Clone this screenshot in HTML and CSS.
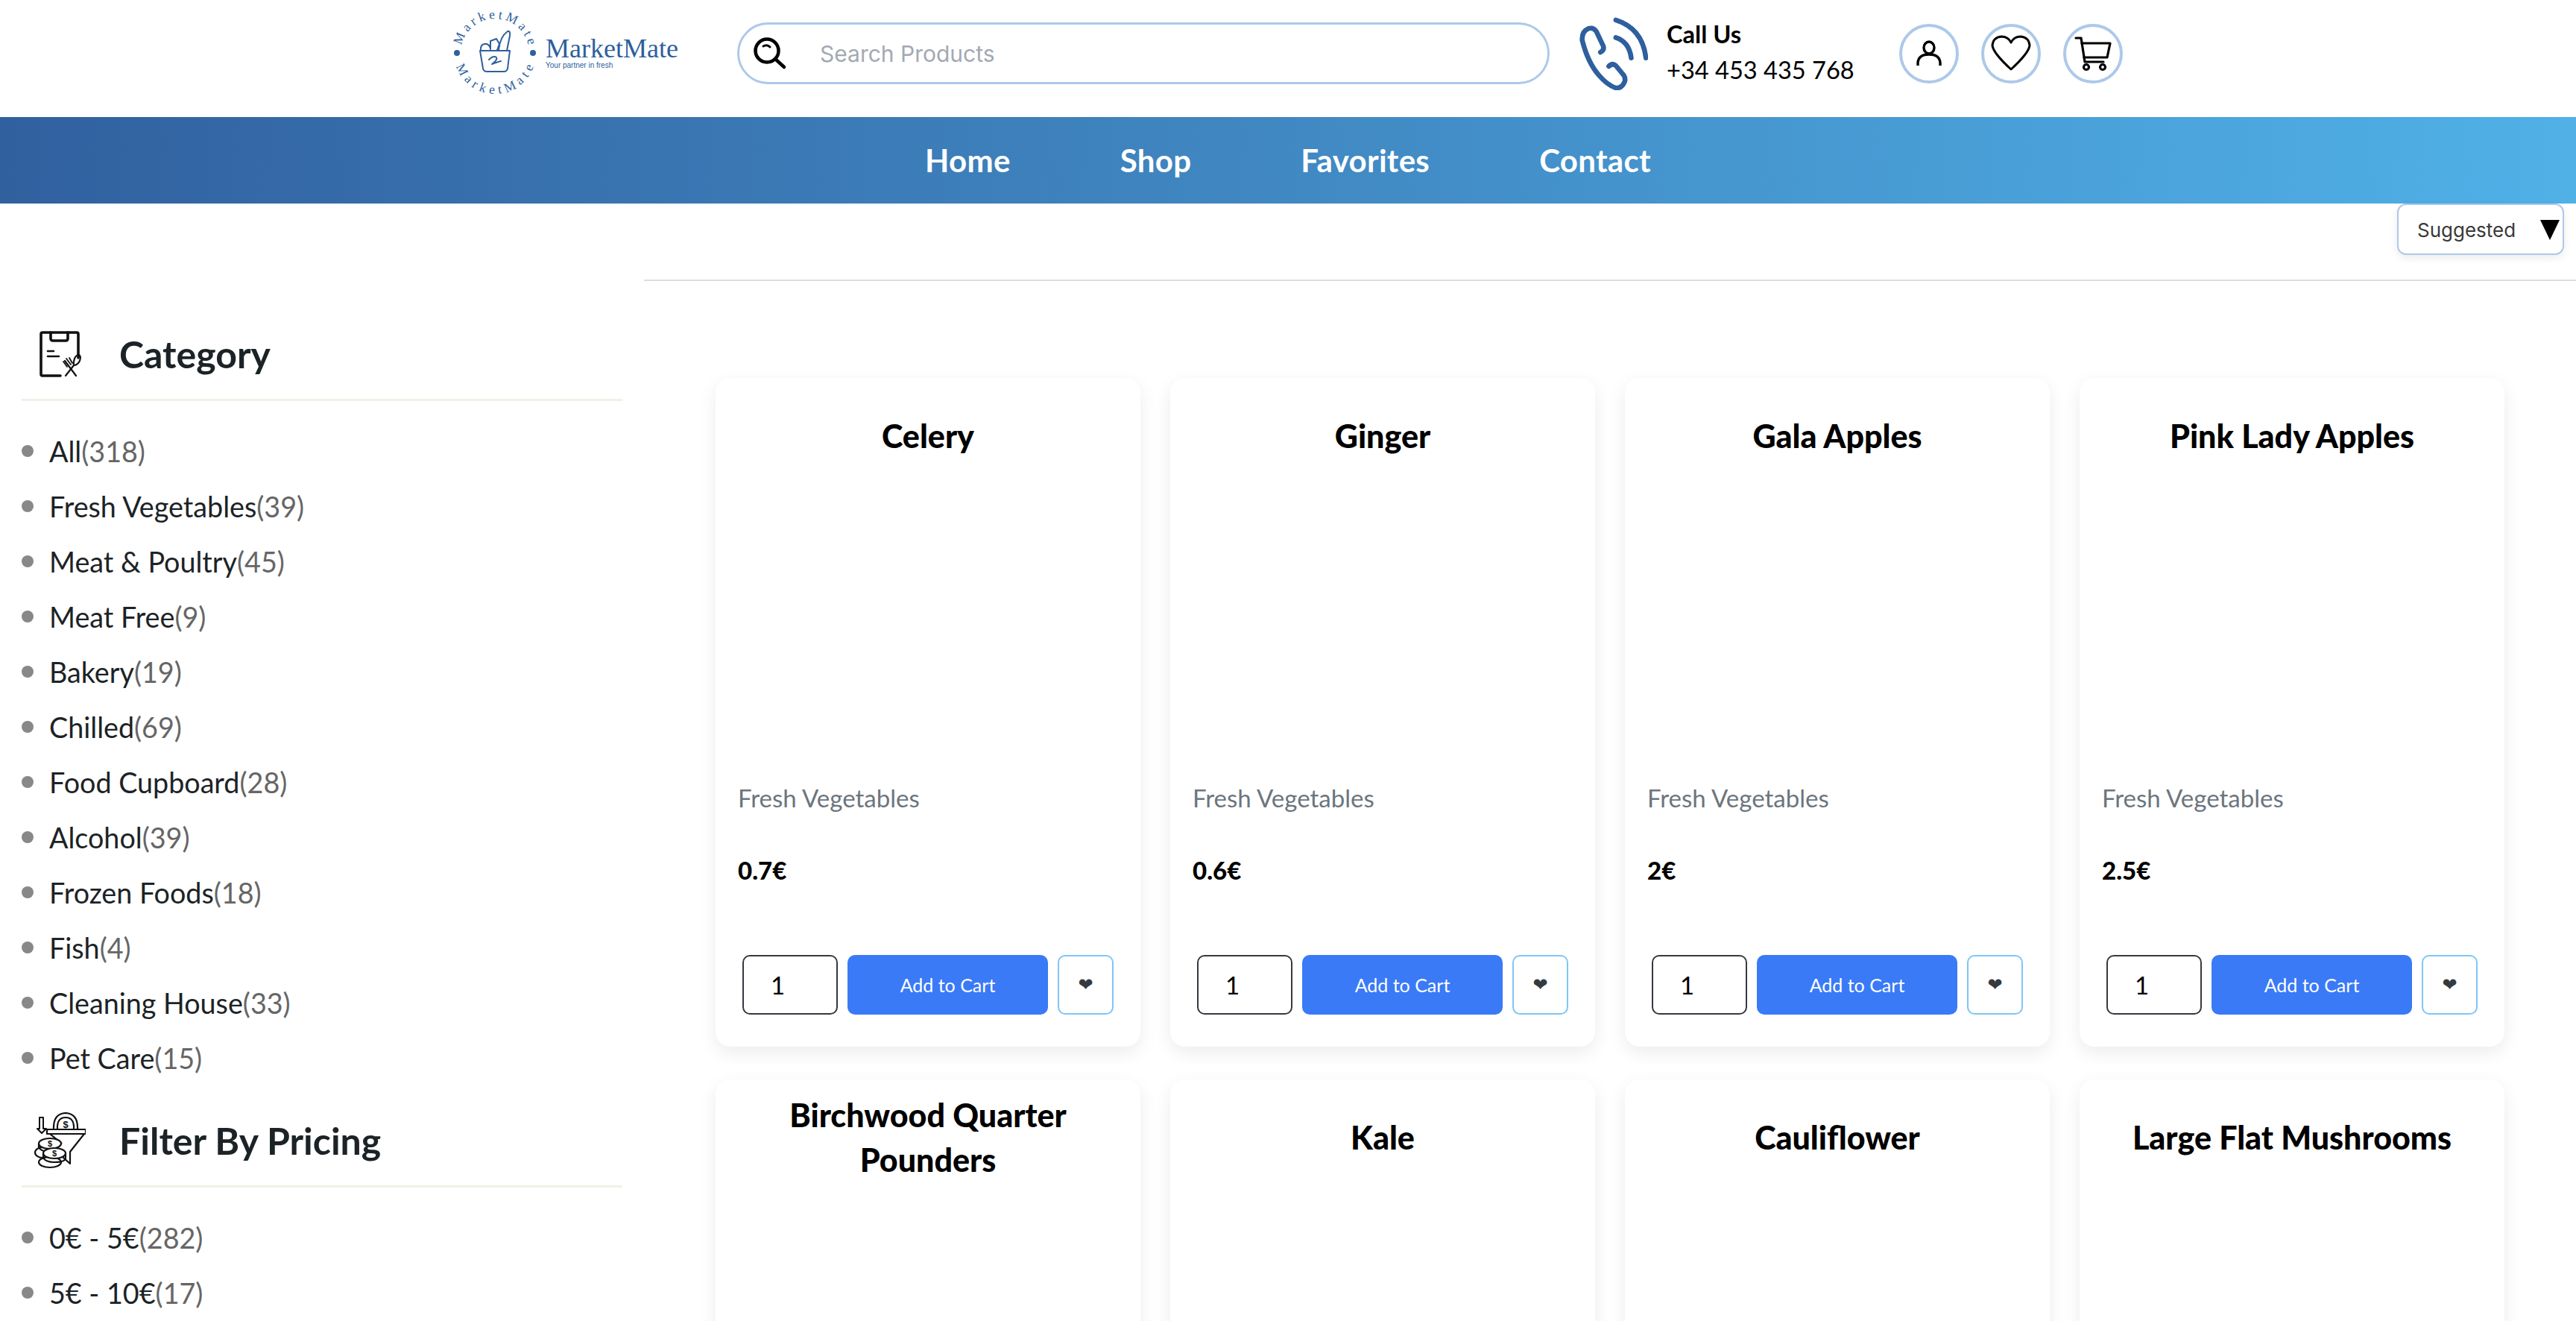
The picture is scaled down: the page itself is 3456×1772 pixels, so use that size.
FILE: index.html
```html
<!DOCTYPE html>
<html lang="en">
<head>
  <meta charset="UTF-8">
  <title>MarketMate</title>
  <link rel="stylesheet" href="styles.css">
</head>
<body>

  <header class="top-bar">
    <a class="logo" href="#">
      <svg class="logo-mark" viewBox="0 0 112 118">
        <defs>
          <path id="arcTop" d="M10 58 A46 46 0 0 1 102 58"/>
          <path id="arcBottom" d="M1 58 A55 55 0 0 0 111 58"/>
        </defs>
        <text class="logo-ring"><textPath href="#arcTop" startOffset="10" textLength="124">MarketMate</textPath></text>
        <text class="logo-ring"><textPath href="#arcBottom" startOffset="18" textLength="136">MarketMate</textPath></text>
        <circle cx="5" cy="58" r="4" fill="#2e5f9e"/>
        <circle cx="107" cy="58" r="4" fill="#2e5f9e"/>
        <g fill="none" stroke="#2e5f9e" stroke-width="2" stroke-linejoin="round" stroke-linecap="round">
          <path d="M36 55h40l-3 24q-1 4-5 4H45q-4 0-5-4z"/>
          <path d="M48 67q6-6 10-3q2 3-6 9q8-3 12-4"/>
          <path d="M37 55q-1-8 5-9q6-1 8 6"/>
          <path d="M50 53V42l8-3 4 7-3 8"/>
          <path d="M61 54q2-18 12-25q4-1 3 6l-4 20"/>
        </g>
      </svg>
      <div class="logo-text">
        <span class="logo-name">MarketMate</span>
        <span class="logo-tag">Your partner in fresh</span>
      </div>
    </a>

    <form class="search-box">
      <svg class="search-icon" viewBox="0 0 48 48" fill="none" stroke="#000" stroke-width="4.5" stroke-linecap="round">
        <circle cx="21" cy="20" r="15.5"/>
        <path d="M32 31l12 11"/>
        <path d="M16 14q5-3 9 1" stroke-width="3"/>
      </svg>
      <input type="text" placeholder="Search Products">
    </form>

    <div class="call">
      <svg class="call-icon" viewBox="0 0 98 104" fill="none" stroke="#2e5f9e" stroke-width="7" stroke-linecap="round" stroke-linejoin="round">
        <path d="M30 50q6-3 4-9L24 20q-4-6-11-4Q3 20 4 33q8 32 24 50q12 14 24 18q9 1 13-10q1-6-4-11l-9-11q-5-4-10 1"/>
        <path d="M52 4q38 12 43 54"/>
        <path d="M52 29q19 6 22 29"/>
      </svg>
      <div class="call-text">
        <span class="call-label">Call Us</span>
        <span class="call-number">+34 453 435 768</span>
      </div>
    </div>

    <div class="header-icons">
      <a class="round-icon" href="#">
        <svg viewBox="0 0 44 44" fill="none" stroke="#000" stroke-width="3.4">
          <ellipse cx="22" cy="14" rx="7" ry="8"/>
          <path d="M7 38v-4q1-11 15-11t15 11v4"/>
        </svg>
      </a>
      <a class="round-icon" href="#">
        <svg viewBox="0 0 56 50" class="icon-heart" fill="none" stroke="#000" stroke-width="3" stroke-linejoin="round">
          <path d="M28 46Q4 24 3 14Q4 3 15 2q9 0 13 8q4-8 13-8q11 1 12 12q-1 10-25 32z"/>
        </svg>
      </a>
      <a class="round-icon" href="#">
        <svg viewBox="0 0 50 50" class="icon-cart" fill="none" stroke="#000" stroke-width="3.2" stroke-linecap="round" stroke-linejoin="round">
          <path d="M2 4h7l5 32h25"/>
          <path d="M10 11h38l-4 19H13"/>
          <circle cx="16" cy="43" r="3.5"/>
          <circle cx="38" cy="43" r="3.5"/>
        </svg>
      </a>
    </div>
  </header>

  <nav class="main-nav">
    <a href="#">Home</a>
    <a href="#">Shop</a>
    <a href="#">Favorites</a>
    <a href="#">Contact</a>
  </nav>

  <div class="page">
    <aside class="sidebar">
      <div class="side-head">
        <svg class="side-icon" viewBox="0 0 60 64" fill="none" stroke="#111" stroke-width="3.6" stroke-linecap="round" stroke-linejoin="round">
          <path d="M30 61H6q-2 0-2-2V5q0-2 2-2h46q2 0 2 2v32"/>
          <path d="M17 3v8q0 3 3 3h17q3 0 3-3V3"/>
          <path d="M13 28h8M13 35h15" stroke-width="2.6"/>
          <path d="M37 61l11-14M48 47q5 0 8-6q2-6-1-8q-4 0-6 5q-2 5-1 9M36 41l15 20" stroke-width="2.2"/>
          <path d="M34 42l5 7M38 38l6 8M42 37l4 7" stroke-width="1.8"/>
        </svg>
        <h2>Category</h2>
      </div>
      <ul class="side-list">
        <li>All<span>(318)</span></li>
        <li>Fresh Vegetables<span>(39)</span></li>
        <li>Meat &amp; Poultry<span>(45)</span></li>
        <li>Meat Free<span>(9)</span></li>
        <li>Bakery<span>(19)</span></li>
        <li>Chilled<span>(69)</span></li>
        <li>Food Cupboard<span>(28)</span></li>
        <li>Alcohol<span>(39)</span></li>
        <li>Frozen Foods<span>(18)</span></li>
        <li>Fish<span>(4)</span></li>
        <li>Cleaning House<span>(33)</span></li>
        <li>Pet Care<span>(15)</span></li>
      </ul>

      <div class="side-head">
        <svg class="side-icon side-icon-wide" viewBox="0 0 70 76" fill="none" stroke="#111" stroke-width="2.2" stroke-linejoin="round">
          <path d="M27 23q-1-21 16-22q17 1 16 22"/>
          <path d="M32 23q-1-16 11-16q12 0 11 16"/>
          <text class="price-sign" x="43" y="21" font-size="13">$</text>
          <path d="M18 23h52v6H18z"/>
          <path d="M22 29l16 13M68 29L49 53v16l-10-9"/>
          <path d="M5 22h3V7h5v15h4l-6 6z" stroke-width="2"/>
          <ellipse cx="12" cy="54" rx="10" ry="7" fill="#fff"/>
          <ellipse cx="22" cy="42" rx="15" ry="7" fill="#fff"/>
          <path d="M7 42v5q3 6 15 6"/>
          <ellipse cx="22" cy="67" rx="15" ry="7" fill="#fff"/>
          <ellipse cx="28" cy="55" rx="15" ry="7" fill="#fff"/>
          <path d="M13 55v6q3 6 15 6q15 0 15-6v-6"/>
          <text class="price-sign" x="22" y="46" font-size="11">$</text>
          <text class="price-sign" x="28" y="59" font-size="11">$</text>
        </svg>
        <h2>Filter By Pricing</h2>
      </div>
      <ul class="side-list">
        <li>0€ - 5€<span>(282)</span></li>
        <li>5€ - 10€<span>(17)</span></li>
      </ul>
    </aside>

    <main class="content">
      <div class="sort-bar">
        <div class="sort-select">
          <span>Suggested</span>
          <i class="sort-arrow"></i>
        </div>
      </div>

      <div class="product-grid">
        <article class="card">
          <h3>Celery</h3>
          <div class="card-image"></div>
          <p class="card-cat">Fresh Vegetables</p>
          <p class="card-price">0.7€</p>
          <div class="card-actions">
            <input type="number" value="1">
            <button class="btn-add">Add to Cart</button>
            <button class="btn-fav">❤</button>
          </div>
        </article>
        <article class="card">
          <h3>Ginger</h3>
          <div class="card-image"></div>
          <p class="card-cat">Fresh Vegetables</p>
          <p class="card-price">0.6€</p>
          <div class="card-actions">
            <input type="number" value="1">
            <button class="btn-add">Add to Cart</button>
            <button class="btn-fav">❤</button>
          </div>
        </article>
        <article class="card">
          <h3>Gala Apples</h3>
          <div class="card-image"></div>
          <p class="card-cat">Fresh Vegetables</p>
          <p class="card-price">2€</p>
          <div class="card-actions">
            <input type="number" value="1">
            <button class="btn-add">Add to Cart</button>
            <button class="btn-fav">❤</button>
          </div>
        </article>
        <article class="card">
          <h3>Pink Lady Apples</h3>
          <div class="card-image"></div>
          <p class="card-cat">Fresh Vegetables</p>
          <p class="card-price">2.5€</p>
          <div class="card-actions">
            <input type="number" value="1">
            <button class="btn-add">Add to Cart</button>
            <button class="btn-fav">❤</button>
          </div>
        </article>
        <article class="card">
          <h3>Birchwood Quarter Pounders</h3>
          <div class="card-image"></div>
        </article>
        <article class="card">
          <h3>Kale</h3>
          <div class="card-image"></div>
        </article>
        <article class="card">
          <h3>Cauliflower</h3>
          <div class="card-image"></div>
        </article>
        <article class="card">
          <h3>Large Flat Mushrooms</h3>
          <div class="card-image"></div>
        </article>
      </div>
    </main>
  </div>

</body>
</html>
```

FILE: styles.css
```css
* {
  box-sizing: border-box;
}

html, body {
  height: 100%;
  overflow: hidden;
}

body {
  margin: 0;
  background: #fff;
  color: #000;
  font-family: 'Lato', 'Noto Sans', sans-serif;
}

a {
  color: inherit;
  text-decoration: none;
}

/* Header */
.top-bar {
  height: 157px;
  padding-bottom: 14px;
  display: flex;
  align-items: center;
  justify-content: center;
}

.logo {
  width: 300px;
  margin-right: 81px;
  display: flex;
  align-items: center;
  gap: 12px;
}

.logo-mark {
  width: 112px;
  height: 118px;
  flex: none;
  overflow: visible;
}

.logo-ring {
  font-family: 'Liberation Serif', serif;
  font-size: 17.5px;
  fill: #2e5f9e;
}

.logo-text {
  padding-bottom: 4px;
  display: flex;
  flex-direction: column;
  color: #2e5f9e;
}

.logo-name {
  font-family: 'Liberation Serif', serif;
  font-size: 36px;
  line-height: 36px;
  white-space: nowrap;
}

.logo-tag {
  font-family: 'Liberation Sans', sans-serif;
  font-size: 10px;
  line-height: 10px;
  white-space: nowrap;
}

.search-box {
  width: 1090px;
  height: 83px;
  margin: 0 40px 0 0;
  padding: 0 24px 0 16px;
  display: flex;
  align-items: center;
  gap: 42px;
  border: 3px solid #adc9e9;
  border-radius: 42px;
}

.search-icon {
  width: 48px;
  height: 48px;
  flex: none;
}

.search-box input {
  flex: 1;
  border: none;
  outline: none;
  font-family: 'Inter', sans-serif;
  font-size: 30px;
  color: #333;
}

.search-box input::placeholder {
  color: #a3a9b3;
}

.call {
  width: 369px;
  margin-right: 60px;
  display: flex;
  align-items: center;
  gap: 25px;
}

.call-icon {
  width: 92px;
  height: 98px;
  flex: none;
}

.call-text {
  padding-bottom: 4px;
  display: flex;
  flex-direction: column;
  gap: 12px;
  font-size: 32.6px;
  line-height: 36px;
  white-space: nowrap;
}

.call-label {
  font-weight: 700;
}

.header-icons {
  display: flex;
  gap: 30px;
}

.round-icon {
  width: 80px;
  height: 80px;
  display: flex;
  align-items: center;
  justify-content: center;
  border: 4px solid #adc9e9;
  border-radius: 50%;
}

.round-icon svg {
  width: 44px;
  height: 44px;
}

.round-icon .icon-heart {
  width: 56px;
  height: 50px;
}

.round-icon .icon-cart {
  width: 50px;
  height: 50px;
}

/* Nav */
.main-nav {
  height: 116px;
  display: flex;
  align-items: center;
  justify-content: center;
  gap: 147px;
  background: linear-gradient(90deg, #31609f 0%, #50b1e7 100%);
  color: #fff;
  font-size: 42px;
  font-weight: 700;
  letter-spacing: 0.3px;
}

/* Page */
.page {
  display: flex;
}

.sidebar {
  width: 864px;
  flex: none;
  padding: 165px 29px 0;
}

.side-head {
  height: 100px;
  width: 806px;
  padding-bottom: 24px;
  display: flex;
  align-items: center;
  border-bottom: 3px solid #eff2e6;
}

.side-icon {
  width: 60px;
  height: 64px;
  margin-left: 22px;
  margin-right: 49px;
  flex: none;
}

.side-icon-wide {
  width: 70px;
  height: 76px;
  margin-left: 16px;
  margin-right: 45px;
}

.price-sign {
  font-family: 'Liberation Sans', sans-serif;
  font-weight: 700;
  text-anchor: middle;
  fill: #111;
  stroke: none;
}

.side-head h2 {
  margin: 0;
  font-size: 50px;
  font-weight: 700;
  color: #1c2326;
}

.side-list {
  list-style: none;
  margin: 0 0 37px;
  padding: 30px 0 0;
}

.side-list li {
  height: 74px;
  display: flex;
  align-items: center;
  font-size: 37.7px;
  color: #1c2326;
}

.side-list li::before {
  content: "";
  width: 16px;
  height: 16px;
  margin-right: 21px;
  background: #888;
  border-radius: 50%;
}

.side-list span {
  color: #666;
}

.content {
  flex: 1;
}

.sort-bar {
  height: 104px;
  padding-right: 16px;
  display: flex;
  justify-content: flex-end;
  border-bottom: 2px solid #ddd;
}

.sort-select {
  width: 224px;
  height: 69px;
  padding: 2px 4px 0 25px;
  display: flex;
  align-items: center;
  justify-content: space-between;
  background: #fff;
  border: 2px solid #adc9e9;
  border-radius: 12px;
  box-shadow: 0 4px 12px rgba(0, 0, 0, 0.08);
  font-family: 'Inter', sans-serif;
  font-size: 26px;
  color: #3a3a3a;
}

.sort-arrow {
  width: 0;
  height: 0;
  border-left: 13px solid transparent;
  border-right: 13px solid transparent;
  border-top: 27px solid #000;
}

.product-grid {
  padding: 130px 0 0 96px;
  display: grid;
  grid-template-columns: repeat(4, 570px);
  gap: 44px 40px;
}

.card {
  height: 897px;
  padding: 18px 30px 0;
  background: #fff;
  border-radius: 20px;
  box-shadow: 0 8px 24px rgba(0, 0, 0, 0.08);
}

.card h3 {
  height: 120px;
  margin: 0;
  display: flex;
  align-items: center;
  justify-content: center;
  text-align: center;
  font-size: 43px;
  line-height: 60px;
  font-weight: 900;
}

.card-image {
  height: 395px;
}

.card-cat {
  margin: 0;
  font-size: 33px;
  line-height: 60px;
  color: #6c757d;
}

.card-price {
  margin: 37px 0 0;
  font-size: 33px;
  line-height: 60px;
  font-weight: 900;
}

.card-actions {
  margin-top: 84px;
  padding-left: 6px;
  display: flex;
  gap: 13px;
}

.card-actions input {
  width: 128px;
  height: 80px;
  flex: none;
  padding: 0 0 0 36px;
  border: 2px solid #343a40;
  border-radius: 10px;
  font-family: 'Lato', sans-serif;
  font-size: 33px;
  color: #000;
}

.btn-add {
  width: 269px;
  height: 80px;
  flex: none;
  border: none;
  border-radius: 10px;
  background: #3a7af6;
  color: #fff;
  font-family: 'Lato', sans-serif;
  font-size: 25px;
}

.btn-fav {
  width: 75px;
  height: 80px;
  flex: none;
  padding: 0;
  border: 2px solid #7fc6f5;
  border-radius: 10px;
  background: #fff;
  color: #343a40;
  font-size: 24px;
  font-family: 'DejaVu Sans', sans-serif;
}
```
